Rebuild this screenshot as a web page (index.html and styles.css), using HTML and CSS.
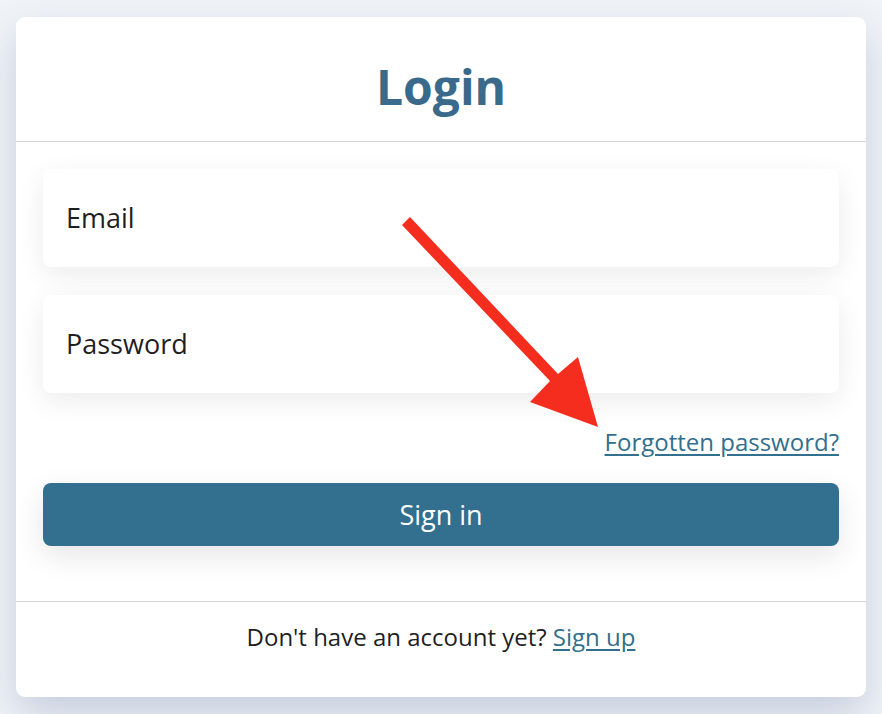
FILE: index.html
```html
<!DOCTYPE html>
<html>
<head>
<meta charset="utf-8">
<link rel="stylesheet" href="styles.css">
</head>
<body>
<div class="card">
  <div class="card-header"><h1 class="title">Login</h1></div>
  <form class="card-body">
    <div class="field">Email</div>
    <div class="field">Password</div>
    <div class="forgot-row"><a class="link" href="#">Forgotten password?</a></div>
    <button class="btn" type="button">Sign in</button>
  </form>
  <div class="card-footer">Don't have an account yet? <a class="link" href="#">Sign up</a></div>
  <svg class="arrow" width="882" height="714" viewBox="0 0 882 714">
    <polygon fill="#f52d1e" points="410,217 402,225 550,381 530,402 598,427 578,357 558,374"/>
  </svg>
</div>
</body>
</html>
```
FILE: styles.css
```css
html, body {
  margin: 0;
  padding: 0;
}
body {
  width: 882px;
  height: 714px;
  background: #f0f4f8;
  font-family: "Open Sans", "Liberation Sans", sans-serif;
  overflow: hidden;
}
.card {
  margin: 17px 16px 0 16px;
  width: 850px;
  height: 680px;
  background: #ffffff;
  border-radius: 9px;
  box-shadow: 0 18px 40px rgba(70, 85, 140, 0.24);
  display: flex;
  flex-direction: column;
}
.card-header {
  height: 124px;
  border-bottom: 1px solid #d4d4d4;
  display: flex;
  align-items: center;
  justify-content: center;
}
.title {
  margin: 0;
  font-size: 48px;
  font-weight: 700;
  color: #3a6a8b;
  line-height: 1;
  padding-top: 16px;
}
.card-body {
  margin: 0;
  padding: 27px 27px 0 27px;
  height: 432px;
  border-bottom: 1px solid #d4d4d4;
  display: flex;
  flex-direction: column;
}
.field {
  height: 98px;
  border-radius: 8px;
  background: #fff;
  box-shadow: 0 8px 28px rgba(0, 0, 0, 0.08);
  display: flex;
  align-items: center;
  padding-left: 23px;
  padding-bottom: 2px;
  box-sizing: border-box;
  font-size: 27px;
  color: #1f1f1f;
  margin-bottom: 28px;
}
.field + .field {
  margin-bottom: 0;
}
.forgot-row {
  display: flex;
  justify-content: flex-end;
  margin-top: 34px;
  height: 30px;
  line-height: 30px;
  font-size: 24px;
}
.link {
  color: #336f8e;
  text-decoration: underline;
  text-underline-offset: 3px;
}
.btn {
  margin-top: 26px;
  height: 63px;
  border: none;
  border-radius: 8px;
  background: #336f8e;
  color: #fff;
  font-family: "Open Sans", "Liberation Sans", sans-serif;
  font-size: 27px;
  box-shadow: 0 10px 30px rgba(0, 0, 0, 0.1);
  padding: 0;
}
.card-footer {
  padding-top: 20px;
  text-align: center;
  font-size: 24px;
  line-height: 30px;
  color: #1f1f1f;
}
.arrow {
  position: absolute;
  left: 0;
  top: 0;
  pointer-events: none;
}
```
